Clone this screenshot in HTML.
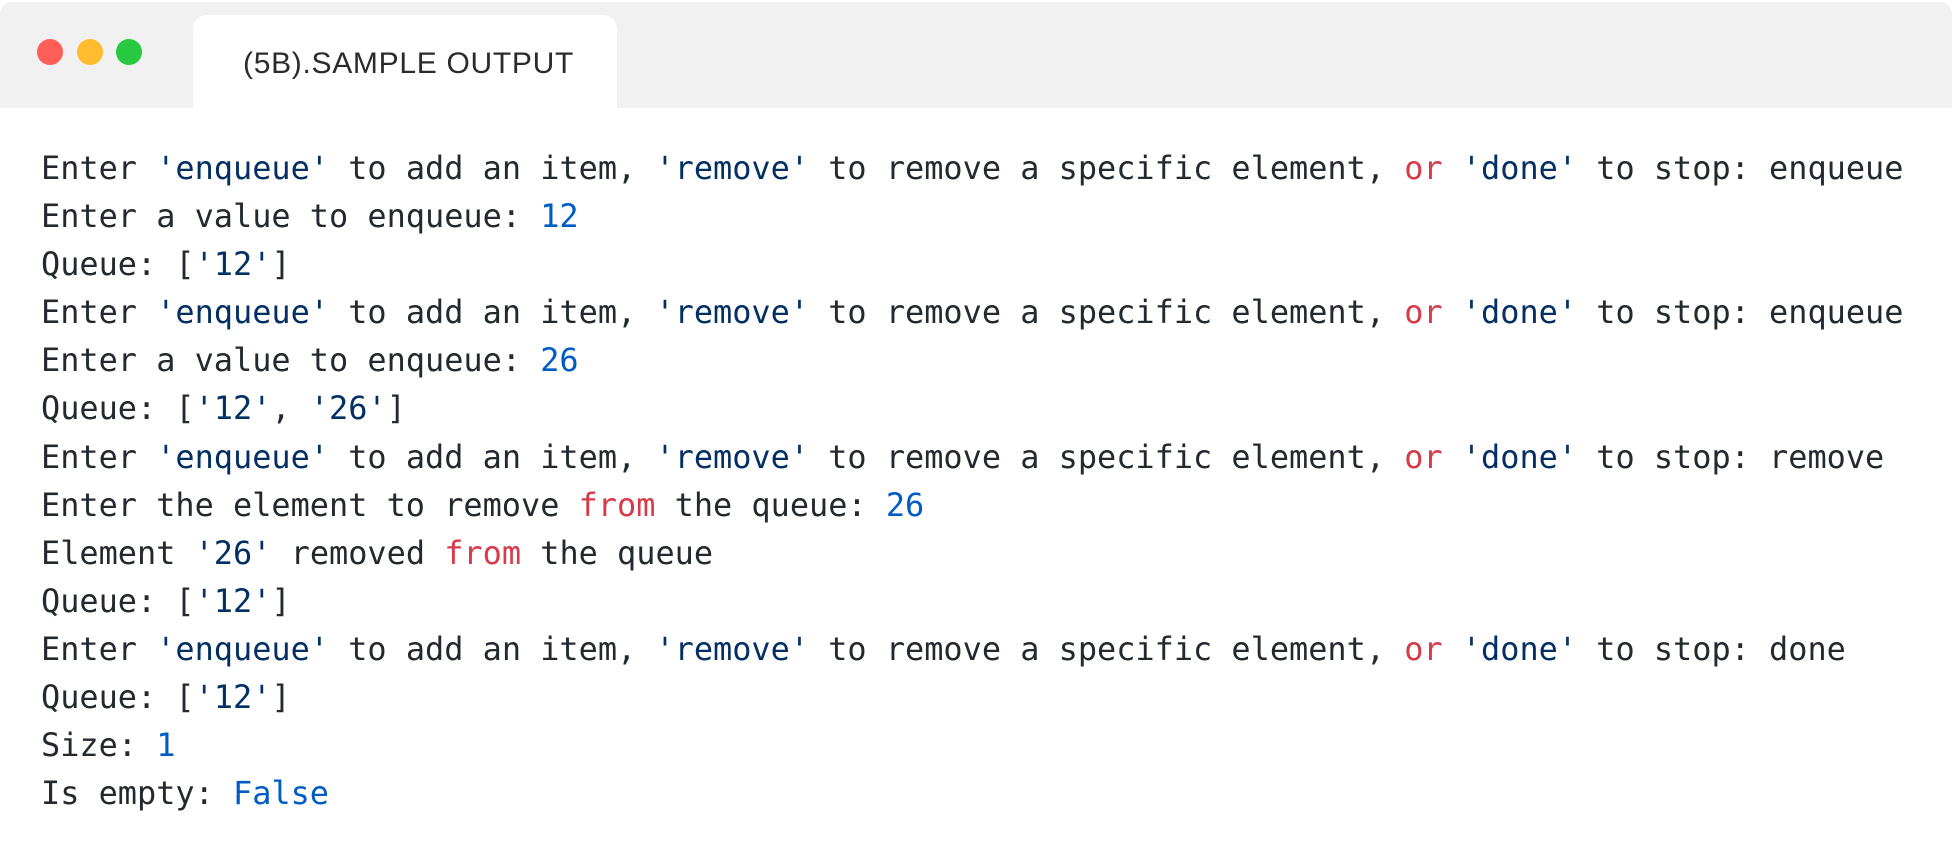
<!DOCTYPE html>
<html><head><meta charset="utf-8"><style>
html,body{margin:0;padding:0;background:#fff;width:1952px;height:857px;overflow:hidden}
.bar{position:absolute;left:0;top:2px;width:1952px;height:106px;background:#f1f1f1;border-radius:12px 12px 0 0}
.dot{position:absolute;top:39px;width:26px;height:26px;border-radius:50%}
.tab{position:absolute;left:193px;top:15px;width:424px;height:93px;background:#fff;border-radius:14px 14px 0 0}
.tab span{position:absolute;left:50px;top:32px;font:30px "Liberation Sans",sans-serif;color:#2b2b2b;letter-spacing:0.7px}
pre{position:absolute;left:41px;top:144px;margin:0;font-family:"DejaVu Sans Mono","Liberation Mono",monospace;font-size:31.9px;line-height:48.1px;color:#24292f}
.s{color:#032f62}.k{color:#d73a49}.n{color:#005cc5}
</style></head><body>
<div class="bar"></div>
<div class="dot" style="left:37px;background:#ff5f57"></div>
<div class="dot" style="left:77px;background:#febc2e"></div>
<div class="dot" style="left:116px;background:#28c840"></div>
<div class="tab"><span>(5B).SAMPLE OUTPUT</span></div>
<pre>Enter <span class="s">'enqueue'</span> to add an item, <span class="s">'remove'</span> to remove a specific element, <span class="k">or</span> <span class="s">'done'</span> to stop: enqueue
Enter a value to enqueue: <span class="n">12</span>
Queue: [<span class="s">'12'</span>]
Enter <span class="s">'enqueue'</span> to add an item, <span class="s">'remove'</span> to remove a specific element, <span class="k">or</span> <span class="s">'done'</span> to stop: enqueue
Enter a value to enqueue: <span class="n">26</span>
Queue: [<span class="s">'12'</span>, <span class="s">'26'</span>]
Enter <span class="s">'enqueue'</span> to add an item, <span class="s">'remove'</span> to remove a specific element, <span class="k">or</span> <span class="s">'done'</span> to stop: remove
Enter the element to remove <span class="k">from</span> the queue: <span class="n">26</span>
Element <span class="s">'26'</span> removed <span class="k">from</span> the queue
Queue: [<span class="s">'12'</span>]
Enter <span class="s">'enqueue'</span> to add an item, <span class="s">'remove'</span> to remove a specific element, <span class="k">or</span> <span class="s">'done'</span> to stop: done
Queue: [<span class="s">'12'</span>]
Size: <span class="n">1</span>
Is empty: <span class="n">False</span></pre>
</body></html>
